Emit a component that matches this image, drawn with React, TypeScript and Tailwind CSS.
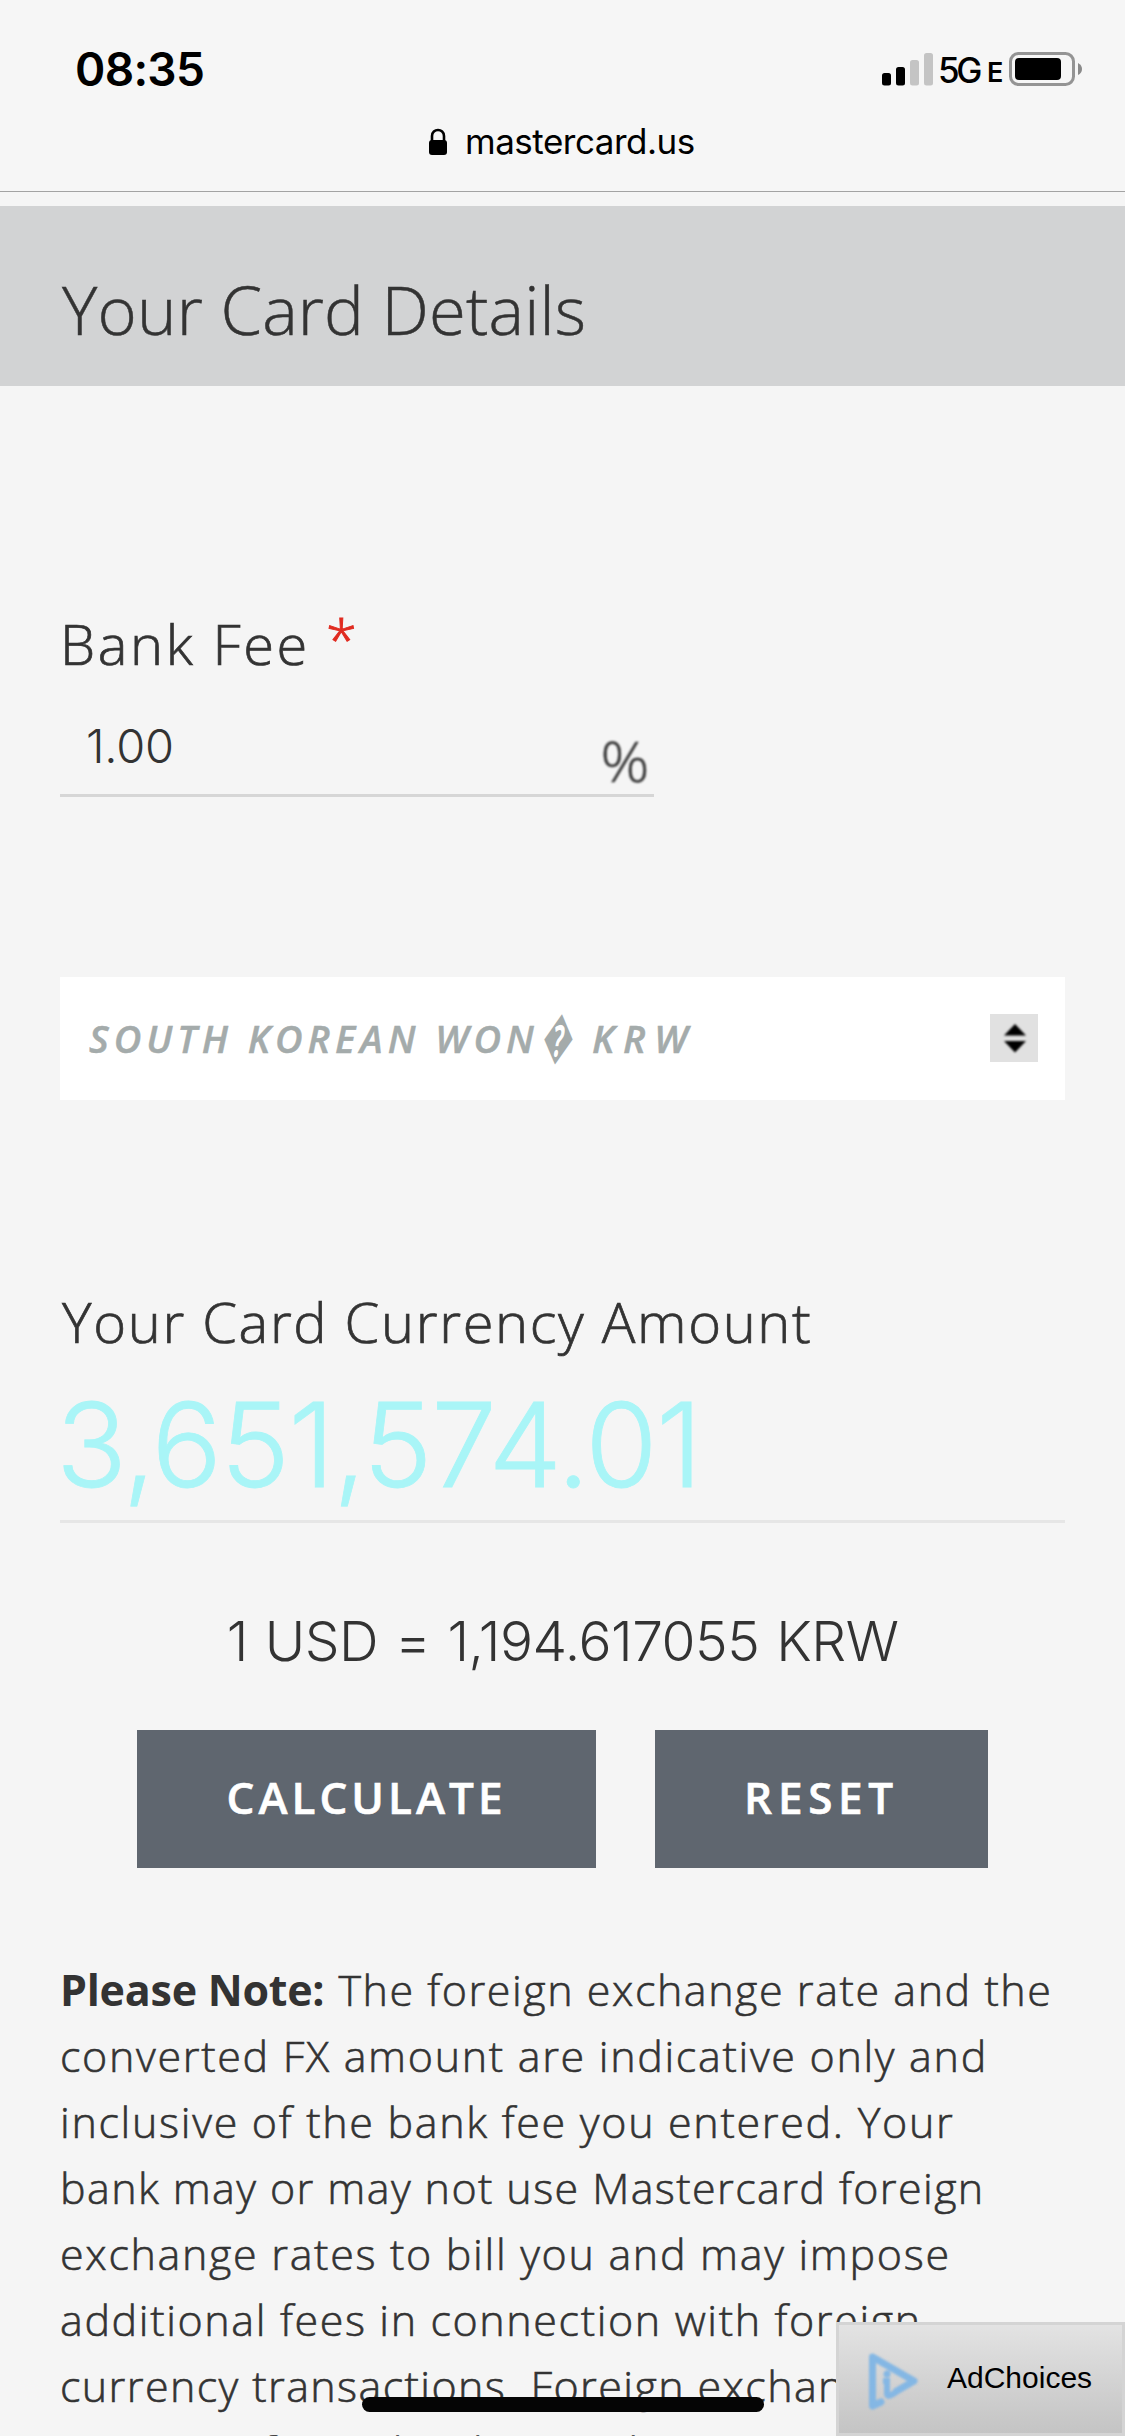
const NOTE_LINES = [
  { text: "converted FX amount are indicative only and", spacing: "tracking-[1.68px]" },
  { text: "inclusive of the bank fee you entered. Your", spacing: "tracking-[1.69px]" },
  { text: "bank may or may not use Mastercard foreign", spacing: "tracking-[1.4px]" },
  { text: "exchange rates to bill you and may impose", spacing: "tracking-[1.68px]" },
  { text: "additional fees in connection with foreign", spacing: "tracking-[1.62px]" },
  { text: "currency transactions. Foreign exchange", spacing: "tracking-[1.4px]" },
  { text: "rate specific to the date and time", spacing: "tracking-[1.4px]" },
];

function StatusIcons() {
  return (
    <div className="flex h-[34px] items-end">
      <svg width="52" height="34" viewBox="0 0 52 34" className="block">
        <rect x="0" y="21" width="9" height="12.5" rx="2.5" fill="#000" />
        <rect x="14" y="15" width="9" height="18.5" rx="2.5" fill="#000" />
        <rect x="28" y="8" width="9" height="25.5" rx="2.5" fill="#c4c4c4" />
        <rect x="42" y="1" width="9" height="32.5" rx="2.5" fill="#c4c4c4" />
      </svg>
      <span className="ml-[4px] w-[43px] translate-y-[3px] text-[35px] leading-[38px] font-medium tracking-[-3.4px]">
        5G
      </span>
      <span className="ml-[6px] w-[22px] translate-y-[3px] text-[27px] leading-[32px] font-semibold">E</span>
      <svg width="74" height="34" viewBox="0 0 74 34" className="block">
        <rect x="1.5" y="1.5" width="63" height="31" rx="8" fill="none" stroke="#949494" strokeWidth="3" />
        <rect x="6" y="6" width="46" height="22" rx="4" fill="#000" />
        <path d="M69 11 Q73 13 73 17 Q73 21 69 23 Z" fill="#8a8a8a" />
      </svg>
    </div>
  );
}

function BrowserHeader() {
  return (
    <header className="h-[192px] border-b border-[#a3a3a3] bg-[#f6f6f6] font-[Inter,sans-serif] font-normal text-black">
      <div className="flex h-[120px] items-start justify-between pt-[46px] pr-[42px] pl-[75px]">
        <span className="text-[46px] leading-[46px] font-semibold tracking-[-0.7px]">08:35</span>
        <div className="pt-[6px]">
          <StatusIcons />
        </div>
      </div>
      <div className="flex h-[42px] items-center pl-[429px]">
        <svg width="18" height="27" viewBox="0 0 18 27" className="mr-[18px] block">
          <path d="M3 14 V8 C3 0 15 0 15 8 V14" fill="none" stroke="#000" strokeWidth="2.6" />
          <rect x="0" y="12" width="18" height="15" rx="3" fill="#000" />
        </svg>
        <span className="text-[35px] leading-[42px] tracking-[-0.5px]">mastercard.us</span>
      </div>
    </header>
  );
}

function CurrencySelect() {
  return (
    <div className="mt-[180px] flex h-[123px] items-center bg-white pr-[27px] pb-[2px] pl-[29px] text-[38px] font-semibold text-[#a4abab] italic">
      <span className="w-[456px] leading-[52px] tracking-[4.98px] whitespace-nowrap [-webkit-text-stroke:0.5px]">
        SOUTH KOREAN WON
      </span>
      <span className="flex w-[28px] -translate-y-[3px] scale-x-[0.56] -skew-x-[14deg] justify-center text-[55px] leading-[52px] font-normal not-italic">
        �
      </span>
      <span className="ml-[19px] flex-1 leading-[52px] tracking-[8.8px] [-webkit-text-stroke:0.5px]">KRW</span>
      <span className="flex size-[48px] items-center justify-center bg-[#e1e1e1] pl-[1px]">
        <svg width="22" height="30" viewBox="0 0 22 30" className="block blur-[0.8px]">
          <path d="M11 1 L22 12.5 H0 Z M0 18 H22 L11 29.5 Z" fill="#000" />
        </svg>
      </span>
    </div>
  );
}

function AdChoices() {
  return (
    <div className="absolute right-0 bottom-0 flex h-[114px] w-[289px] items-center border-[3px] border-[#d4d4d4] bg-linear-to-b from-[#e3e3e3] to-[#c4c4c4] pl-[30px]">
      <svg width="50" height="60" viewBox="0 0 50 60" className="mt-[4px] block blur-[0.9px]">
        <path
          d="M3.5 54 V6 L45 30 L26 41"
          fill="none"
          stroke="#84b7e4"
          strokeWidth="7"
          strokeLinejoin="round"
        />
        <path d="M3.5 55 L12 51" stroke="#84b7e4" strokeWidth="7" strokeLinecap="round" />
        <circle cx="18" cy="23" r="3.5" fill="#84b7e4" />
        <path d="M14 30 H18 V43 Q19 47 27 41" fill="none" stroke="#84b7e4" strokeWidth="6" />
      </svg>
      <span className="ml-[28px] -translate-y-[1px] font-['Liberation_Sans',sans-serif] text-[30px] leading-[36px] font-normal text-black">
        AdChoices
      </span>
    </div>
  );
}

export default function App() {
  return (
    <div className="relative h-[2436px] w-[1125px] overflow-hidden bg-[#f5f5f5] font-['Open_Sans',sans-serif] font-light text-[#333333]">
      <BrowserHeader />

      <div className="mt-[14px] flex h-[180px] items-center bg-[#d2d3d4] pt-[26px] pl-[62px]">
        <h1 className="text-[67px] leading-[90px] tracking-[0.15px] [-webkit-text-stroke:0.5px]">Your Card Details</h1>
      </div>

      <main className="px-[60px] pt-[224px]">
        <label className="flex h-[66px] text-[56px] leading-[66px] tracking-[2.6px] [-webkit-text-stroke:0.7px]">
          Bank Fee
          <span className="ml-[16px] -translate-y-[5px] text-[#e02b20] [-webkit-text-stroke:1px]">*</span>
        </label>
        <div className="flex h-[121px] w-[594px] justify-between border-b-[3px] border-[#d6d6d6] pr-[5px] pl-[26px]">
          <span className="pt-[40px] font-[Inter,sans-serif] text-[47px] leading-[60px] tracking-[-0.2px]">1.00</span>
          <span className="origin-right scale-x-[1.08] pt-[54px] text-[56px] leading-[60px] text-[#333] blur-[1px] [-webkit-text-stroke:0.4px]">
            %
          </span>
        </div>

        <CurrencySelect />

        <h2 className="mt-[188px] pl-[2px] text-[56px] leading-[66px] tracking-[1.67px] [-webkit-text-stroke:0.7px]">
          Your Card Currency Amount
        </h2>
        <div className="mt-[23px] h-[146px] border-b-[3px] border-[#e6e6e6] pt-[3px] font-[Inter,sans-serif] text-[117px] leading-[130px] tracking-[-1.4px] text-[#a9f5f7] [-webkit-text-stroke:0.8px]">
          <span className="-ml-[4px]">3,651,574.01</span>
        </div>

        <p className="mt-[85px] mb-[56px] text-center font-[Inter,sans-serif] text-[55px] leading-[66px] tracking-[-0.5px] [word-spacing:2px]">
          1 USD = 1,194.617055 KRW
        </p>

        <div className="flex justify-center gap-[59px] font-semibold text-white [-webkit-text-stroke:0.6px]">
          <button className="h-[138px] w-[459px] bg-[#5f666f] pb-[4px] text-[44px] tracking-[4px]">CALCULATE</button>
          <button className="h-[138px] w-[333px] bg-[#5f666f] pb-[4px] text-[44px] tracking-[5.7px]">RESET</button>
        </div>

        <p className="mt-[89px] text-[43px] leading-[66px] whitespace-nowrap [-webkit-text-stroke:0.6px]">
          <span className="flex tracking-[1.55px]">
            <b className="mr-[14px] font-bold tracking-[-0.25px] [-webkit-text-stroke:0px]">Please Note:</b>
            The foreign exchange rate and the
          </span>
          {NOTE_LINES.map((line) => (
            <span key={line.text} className={`block ${line.spacing}`}>
              {line.text}
            </span>
          ))}
        </p>
      </main>

      <AdChoices />
      <div className="absolute bottom-[24px] left-[362px] h-[15px] w-[402px] rounded-full bg-[#050505]" />
    </div>
  );
}
